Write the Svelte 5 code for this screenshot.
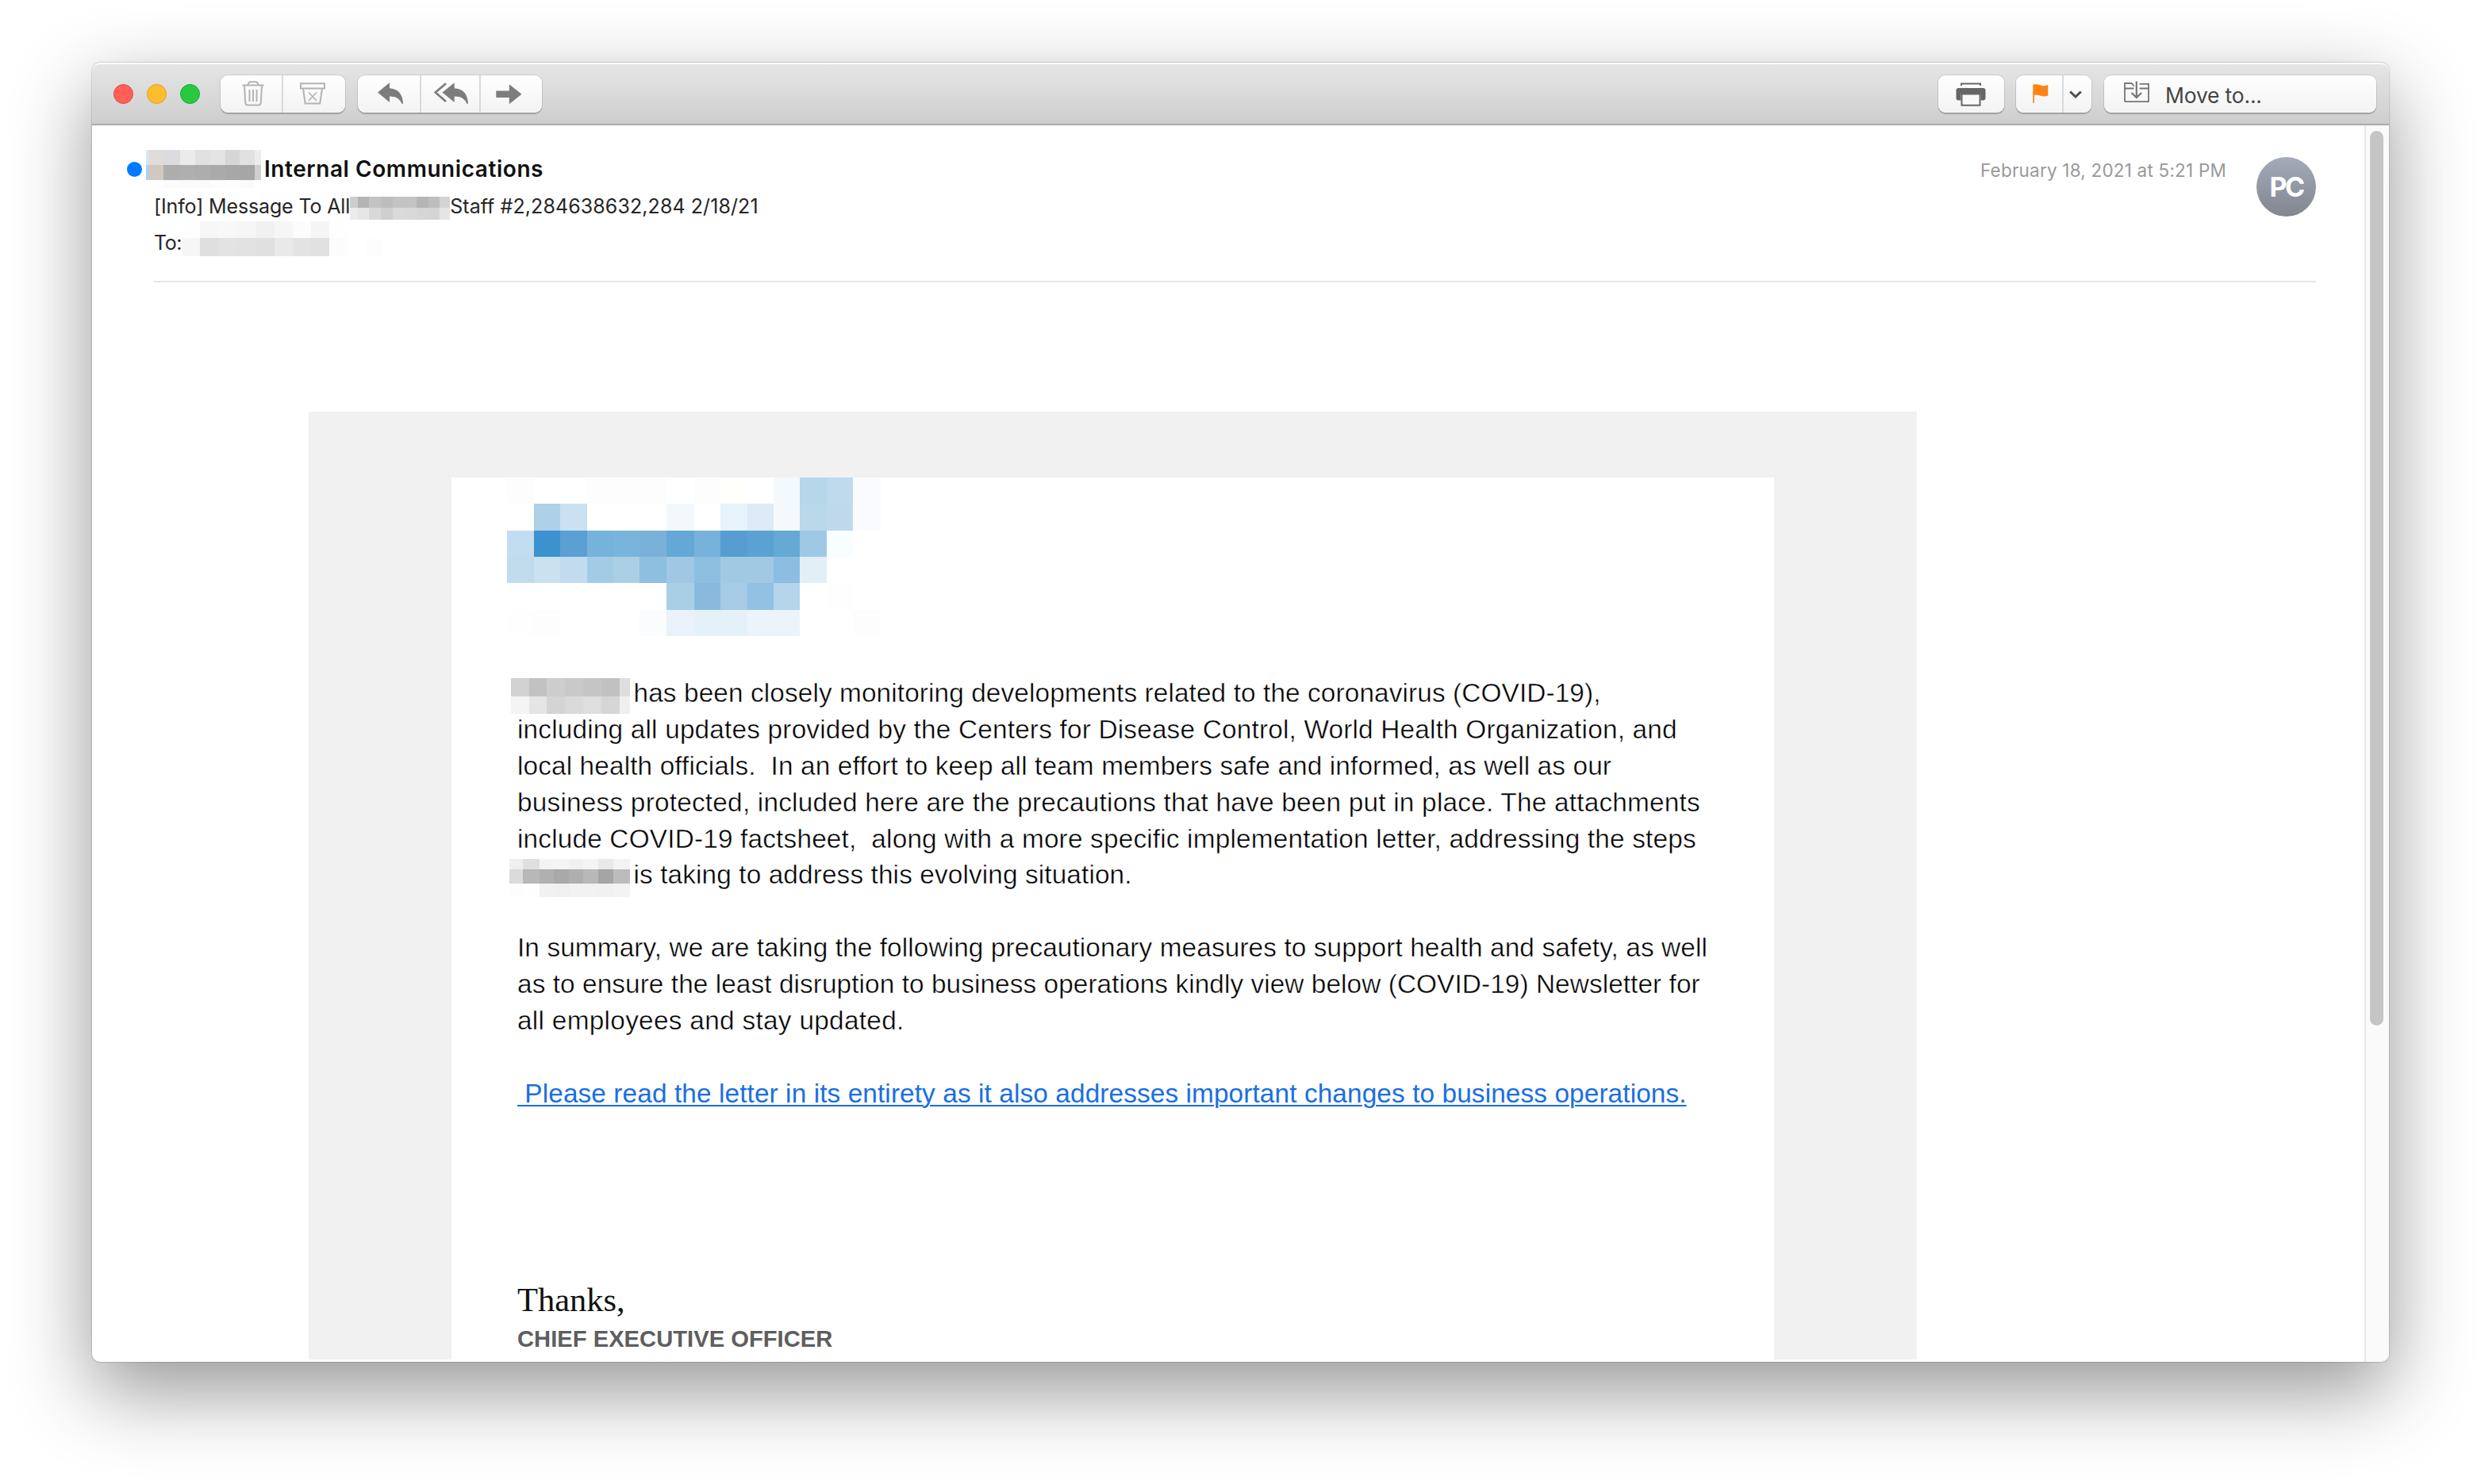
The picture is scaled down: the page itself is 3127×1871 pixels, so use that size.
<script lang="ts">
  interface Pixels {
    name: string;
    cols: number[];
    rows: number[];
    cells: string[][];
  }

  interface Line {
    text: string;
    spacing: number;
    block?: Pixels;
  }

  // Pixelated blocks: column edges, row edges and one colour per cell
  const sender: Pixels = {
    name: 'sender',
    cols: [0, 3, 22, 43, 62, 81, 100, 118, 137, 145],
    rows: [0, 19, 38, 48],
    cells: [
      ['#d5e8fb', '#e0dcd9', '#dadcdf', '#ebebeb', '#e1e1e1', '#e4e4e4', '#d6d6d6', '#e1e1e1', '#ececec'],
      ['#a6d2fc', '#d1c8be', '#adadad', '#afafaf', '#adadad', '#aaaaaa', '#a7a7a7', '#a6a6a6', '#cfcfcf'],
      ['#fdfdff', '#fefefe', '#fbfbfb', '#fafafa', '#fafafa', '#fcfcfc', '#fefefe', '#fafafa', '#fefefe']
    ]
  };

  const subject: Pixels = {
    name: 'subject',
    cols: [0, 10, 24, 39, 54, 69, 84, 99, 113, 126],
    rows: [0, 14, 29],
    cells: [
      ['#cdcdcd', '#b4b4b4', '#c3c3c3', '#bdbdbd', '#c4c4c4', '#c4c4c4', '#b5b5b5', '#bebebe', '#d3d3d3'],
      ['#ebebeb', '#e6e6e6', '#d8d8d8', '#cfcfcf', '#dadada', '#d9d9d9', '#d6d6d6', '#d5d5d5', '#e5e5e5']
    ]
  };

  const recipient: Pixels = {
    name: 'recipient',
    cols: [0, 23, 46, 69, 94, 117, 140, 163, 186, 209, 232, 254],
    rows: [0, 21, 44],
    cells: [
      ['#fefefe', '#f7f7f7', '#f8f8f8', '#f6f6f6', '#f1f1f1', '#f6f6f6', '#fcfcfc', '#f5f5f5', '#fefefe', '#fff', '#fff'],
      ['#f6f6f6', '#dfdfdf', '#e3e3e3', '#e2e2e2', '#e0e0e0', '#e9e9e9', '#e3e3e3', '#e1e1e1', '#fcfcfc', '#fff', '#fdfdfd']
    ]
  };

  const logo: Pixels = {
    name: 'logo',
    cols: [0, 33.5, 67, 100.5, 134, 167, 200.5, 235.5, 269, 302.5, 336, 369, 402.5, 436, 471],
    rows: [0, 33.3, 66.7, 100, 133.3, 166.7, 200],
    cells: [
      ['#fdfdfd', '#fff', '#fff', '#fdfdfd', '#fdfdfd', '#fdfdfd', '#fff', '#fdfdfd', '#fffffc', '#fff', '#f4f9fd', '#b6d6ea', '#bedaec', '#fafbfe'],
      ['#fff', '#aed1e8', '#cae1f1', '#fff', '#fff', '#fff', '#f3f8fc', '#fff', '#e7f3fa', '#dcebf5', '#f5f9fc', '#b9d8ea', '#c0d8ec', '#fafbfe'],
      ['#c2ddef', '#3b92ce', '#5aa0d3', '#76b3db', '#79b4db', '#7ab1d9', '#64a8d5', '#77b2da', '#569dd2', '#5ba2d3', '#65a9d5', '#9fc8e4', '#f8fdff', '#fff'],
      ['#c0dcec', '#cae1ef', '#c3dbee', '#a3cbe6', '#abd0e6', '#8dbfe0', '#a0c8e4', '#8dbfe1', '#a2c9e4', '#a2c9e4', '#8bbee0', '#e2eff7', '#fff', '#fff'],
      ['#fff', '#fff', '#fff', '#fff', '#fff', '#fff', '#a9cfe6', '#89bade', '#a6cbe6', '#93c1e3', '#b4d5eb', '#fff', '#fefefe', '#fff'],
      ['#fefefe', '#fdfdfd', '#fff', '#fff', '#fff', '#fbfcfe', '#e9f1fa', '#e5f1f8', '#e5f1f8', '#ebf3fb', '#ebf3fb', '#fff', '#fff', '#fdfdfd']
    ]
  };

  const company: Pixels = {
    name: 'company',
    cols: [0, 22.5, 45, 68, 91, 114, 137, 149.5],
    rows: [0, 22.7, 45.4],
    cells: [
      ['#d2d2d2', '#c2c2c2', '#cdcdcd', '#c9c9c9', '#c5c5c5', '#c1c1c1', '#dedede'],
      ['#f4f4f4', '#e5e5e5', '#d4d4d4', '#dadada', '#dedede', '#d6d6d6', '#efefef']
    ]
  };

  const companyAgain: Pixels = {
    name: 'company-again',
    cols: [0, 16.5, 38, 55.5, 74.5, 93, 112, 131, 151.5],
    rows: [0, 12.7, 31, 48],
    cells: [
      ['#efefef', '#dfdfdf', '#f3f3f3', '#f4f4f4', '#f1f1f1', '#f4f4f4', '#e9e9e9', '#f3f3f3'],
      ['#dbdbdb', '#b8b8b8', '#b0b0b0', '#a9a9a9', '#afafaf', '#b8b8b8', '#a5a5a5', '#bcbcbc'],
      ['#fdfdfd', '#fefefe', '#f1f1f1', '#f0f0f0', '#f2f2f2', '#f2f2f2', '#f1f1f1', '#f3f3f3']
    ]
  };

  const paragraphs: Line[][] = [
    [
      { text: 'has been closely monitoring developments related to the coronavirus (COVID-19),', spacing: 0.09, block: company },
      { text: 'including all updates provided by the Centers for Disease Control, World Health Organization, and', spacing: 0.17 },
      { text: 'local health officials.\u00a0 In an effort to keep all team members safe and informed, as well as our', spacing: 0.11 },
      { text: 'business protected, included here are the precautions that have been put in place. The attachments', spacing: 0.2 },
      { text: 'include COVID-19 factsheet,\u00a0 along with a more specific implementation letter, addressing the steps', spacing: 0.16 },
      { text: 'is taking to address this evolving situation.', spacing: 0.1, block: companyAgain }
    ],
    [
      { text: 'In summary, we are taking the following precautionary measures to support health and safety, as well', spacing: 0.09 },
      { text: 'as to ensure the least disruption to business operations kindly view below (COVID-19) Newsletter for', spacing: 0.06 },
      { text: 'all employees and stay updated.', spacing: 0.28 }
    ]
  ];
</script>

{#snippet pixelated(block: Pixels)}
  <svg
    class="pixels {block.name}"
    width={block.cols[block.cols.length - 1]}
    height={block.rows[block.rows.length - 1]}
    shape-rendering="crispEdges"
    aria-hidden="true"
  >
    {#each block.cells as row, r}
      {#each row as fill, c}
        <rect
          x={block.cols[c]}
          y={block.rows[r]}
          width={block.cols[c + 1] - block.cols[c]}
          height={block.rows[r + 1] - block.rows[r]}
          {fill}
        />
      {/each}
    {/each}
  </svg>
{/snippet}

<div class="desktop">
  <div class="window">
    <div class="toolbar">
      <div class="lights">
        <span class="light close"></span>
        <span class="light minimize"></span>
        <span class="light maximize"></span>
      </div>

      <div class="group edit">
        <button class="tool trash" aria-label="Delete">
          <svg width="28" height="32" viewBox="0 0 28 32" fill="none" stroke="#b3b3b3" stroke-width="2">
            <path d="M0.5 5.5h27M7.5 5Q8 1.2 11 1.2h6Q20 1.2 20.5 5" />
            <path d="M3 6l1.2 21.5Q4.5 30.6 7.5 30.6h13Q23.5 30.6 23.8 27.5L25 6" />
            <path d="M9.5 11v15M14 11v15M18.5 11v15" />
          </svg>
        </button>
        <button class="tool junk" aria-label="Junk">
          <svg width="32" height="28" viewBox="0 0 32 28" fill="none" stroke="#b3b3b3" stroke-width="2">
            <path d="M1 1.2h30v6.3H1z" />
            <path d="M4 7.5l2.7 19h18.6L28 7.5" />
            <path d="M11 12.5l10 10.5M21 12.5L11 23" stroke-width="1.6" />
          </svg>
        </button>
      </div>

      <div class="group respond">
        <button class="tool reply" aria-label="Reply">
          <svg width="32" height="28" viewBox="0 0 32 28" fill="#7d7d7d">
            <path d="M0 12.5L15 0.3V7.3C25 7.8 31.5 14 32 26.5L30.5 27C28 20.5 23 17.5 15 17.5V25z" />
          </svg>
        </button>
        <button class="tool reply-all" aria-label="Reply all">
          <svg width="43" height="28" viewBox="0 0 43 28" fill="#7d7d7d">
            <path d="M10.5 12.5L25.7 0.3V7.3C36 7.8 42.5 14 43 26.5L41.5 27C39 20.5 34 17.5 25.7 17.5V25z" />
            <path d="M15 1.3L1.8 12.5 15 24" fill="none" stroke="#7d7d7d" stroke-width="2.8" />
          </svg>
        </button>
        <button class="tool forward" aria-label="Forward">
          <svg width="33" height="26" viewBox="0 0 33 26" fill="#7d7d7d">
            <path d="M0.3 8.5h16.5V0.3L32.5 12.8 16.8 25.3V17H0.3z" />
          </svg>
        </button>
      </div>

      <div class="group print">
        <button class="tool printer" aria-label="Print">
          <svg width="38" height="30" viewBox="0 0 38 30" fill="#666">
            <path d="M7 4V1.5h24V4" fill="none" stroke="#666" stroke-width="2" />
            <path d="M3.5 7h31q3 0 3 3v9.5q0 3-3 3h-3v-8h-25v8h-3q-3 0-3-3V10q0-3 3-3z" />
            <path d="M7.5 14.5h23V28.8h-23z" fill="#fafafa" stroke="#666" stroke-width="2" />
          </svg>
        </button>
      </div>

      <div class="group flag">
        <button class="tool flagged" aria-label="Flag">
          <svg width="20" height="24" viewBox="0 0 20 24" fill="#ff8417">
            <path d="M0.3 0.7C4 0 7 0.5 10 1.5S16.5 2.3 19.3 1v13.5c-3 1.5-6 1.3-9.3 0.3S4.5 13.5 2 14v10H0.3z" />
          </svg>
        </button>
        <button class="tool options" aria-label="Flag options">
          <svg width="16" height="10" viewBox="0 0 16 10" fill="none" stroke="#4d4d4d" stroke-width="3">
            <path d="M1.2 1.5L8 8l6.8-6.5" />
          </svg>
        </button>
      </div>

      <button class="group move">
        <svg width="32" height="28" viewBox="0 0 32 28" fill="none" stroke="#757575" stroke-width="1.8">
          <path d="M12.5 9.5H1M1 26.2V3h8q1.5 0 2 1.5t2 1.5M1 26.2h30V3.8H19.5M19.5 9.5H31" />
          <path d="M15.8 0.5v21M9.5 15l6.3 6 6.3-6" stroke-width="2.2" />
        </svg>
        <span>Move to...</span>
      </button>
    </div>

    <div class="body">
      <div class="message">
        <header class="header">
          <div class="details">
            <div class="sender-row">
              <span class="unread"></span>
              {@render pixelated(sender)}
              <span class="sender-name">Internal Communications</span>
            </div>
            <div class="subject-row">
              <span class="subject-start">[Info] Message To All</span>
              {@render pixelated(subject)}
              <span class="subject-end">Staff #2,284638632,284 2/18/21</span>
            </div>
            <div class="to-row">
              <span class="to">To:</span>
              {@render pixelated(recipient)}
            </div>
          </div>
          <div class="date">February 18, 2021 at 5:21 PM</div>
          <div class="avatar">PC</div>
        </header>

        <div class="mail">
          <div class="card">
            {@render pixelated(logo)}
            {#each paragraphs as lines}
              <div class="text">
                {#each lines as line}
                  <div class="line" style:letter-spacing="{line.spacing}px">
                    {#if line.block}
                      {@render pixelated(line.block)}
                    {/if}
                    <span>{line.text}</span>
                  </div>
                {/each}
              </div>
            {/each}
            <div class="text">
              <a class="link" href="#letter">&nbsp;Please read the letter in its entirety as it also addresses important changes to business operations.</a>
            </div>
            <div class="thanks">Thanks,</div>
            <div class="signature">CHIEF EXECUTIVE OFFICER</div>
          </div>
        </div>
      </div>

      <div class="scrollbar">
        <div class="thumb"></div>
      </div>
    </div>
  </div>
</div>

<style>
  :global(body) {
    background: #fff;
    overflow: hidden;
  }

  .desktop {
    box-sizing: border-box;
    width: 3127px;
    height: 1871px;
    padding: 79px 116px;
    font-family: Inter, 'Liberation Sans', sans-serif;
  }

  .window {
    display: flex;
    flex-direction: column;
    width: 2895px;
    height: 1638px;
    border-radius: 10px;
    background: #fff;
    overflow: hidden;
    box-shadow:
      0 0 2px rgba(0, 0, 0, 0.4),
      0 36px 100px rgba(0, 0, 0, 0.42);
  }

  .toolbar {
    box-sizing: border-box;
    flex: none;
    display: flex;
    align-items: center;
    height: 79px;
    padding: 2px 16px 0 27px;
    background: linear-gradient(#e6e6e6, #cecece);
    border-bottom: 2px solid #a9a9a9;
    border-radius: 10px 10px 0 0;
    box-shadow: inset 0 2px 0 #fafafa;
  }

  .lights {
    display: flex;
    gap: 17px;
    margin-right: 26px;
  }

  .light {
    box-sizing: border-box;
    width: 25px;
    height: 25px;
    border-radius: 50%;
  }

  .close {
    background: #ff5f57;
    border: 1.5px solid #e2463f;
  }

  .minimize {
    background: #ffbd2e;
    border: 1.5px solid #e1a116;
  }

  .maximize {
    background: #28c941;
    border: 1.5px solid #12ac28;
  }

  .group {
    box-sizing: border-box;
    display: flex;
    height: 47px;
    border: 0;
    border-radius: 9px;
    background: linear-gradient(#fff, #f3f3f3);
    box-shadow:
      0 0 0 1px rgba(0, 0, 0, 0.09),
      0 2px 1px rgba(0, 0, 0, 0.2);
  }

  .tool {
    box-sizing: border-box;
    flex: 1;
    display: flex;
    align-items: center;
    justify-content: center;
    padding: 0;
    border: 0;
    background: none;
  }

  .tool + .tool {
    border-left: 2px solid #dadada;
  }

  .edit {
    width: 157px;
    margin-right: 16px;
  }

  .trash {
    padding: 0 0 2px 4px;
  }

  .junk {
    padding: 0 5px 2px 0;
  }

  .respond {
    width: 232px;
  }

  .reply {
    flex: 0 0 78px;
    padding: 0 0 2px 4px;
  }

  .reply-all {
    flex: 0 0 75px;
    padding: 0 0 2px 1px;
  }

  .forward {
    padding: 1px 7px 0 0;
  }

  .print {
    width: 83px;
    margin-left: auto;
    margin-right: 15px;
  }

  .printer {
    padding-right: 1px;
  }

  .flag {
    width: 95px;
    margin-right: 16px;
  }

  .flagged {
    padding: 0 0 2px 4px;
  }

  .options {
    flex: 0 0 37px;
    padding-right: 5px;
  }

  .move {
    align-items: center;
    gap: 20px;
    width: 343px;
    padding: 0 0 0 25px;
    font-family: inherit;
    font-size: 26.5px;
    color: #454545;
  }

  .move svg {
    margin-bottom: 5px;
  }

  .move span {
    margin-top: 2px;
    letter-spacing: -0.2px;
  }

  .body {
    flex: 1;
    display: flex;
    min-height: 0;
  }

  .message {
    flex: 1;
    display: flex;
    flex-direction: column;
    min-width: 0;
  }

  .header {
    box-sizing: border-box;
    flex: none;
    display: flex;
    height: 198px;
    margin: 0 61px 0 78px;
    padding-top: 31px;
    border-bottom: 2px solid #e6e6e6;
  }

  .details {
    flex: 1;
    font-size: 25px;
    color: #262626;
    white-space: nowrap;
  }

  .pixels {
    display: block;
    flex: none;
  }

  .sender-row,
  .subject-row,
  .to-row {
    display: flex;
    align-items: center;
  }

  .sender-row {
    height: 48px;
    margin-left: -34px;
  }

  .unread {
    width: 19px;
    height: 19px;
    margin-right: 5px;
    border-radius: 50%;
    background: #007aff;
  }

  .sender-name {
    margin-left: 4px;
    font-size: 28px;
    font-weight: 600;
    letter-spacing: 0.56px;
    color: #111;
  }

  .subject-row {
    height: 45px;
  }

  .subject-row .pixels {
    margin-top: 6px;
  }

  .subject-start {
    letter-spacing: -0.14px;
  }

  .subject-end {
    letter-spacing: 0.08px;
  }

  .to-row {
    height: 46px;
  }

  .to {
    margin-top: 1px;
    letter-spacing: -0.5px;
  }

  .to-row .pixels {
    margin-bottom: 8px;
  }

  .date {
    margin-right: 38px;
    font-size: 22.5px;
    line-height: 52px;
    letter-spacing: 0.2px;
    color: #999;
    white-space: nowrap;
  }

  .avatar {
    width: 75px;
    height: 75px;
    margin-top: 9px;
    border-radius: 50%;
    background: linear-gradient(#a3aab9, #828690);
    color: #fff;
    font-size: 34px;
    font-weight: 700;
    line-height: 76px;
    text-align: center;
    letter-spacing: -2.5px;
  }

  .mail {
    box-sizing: border-box;
    flex: 1;
    display: flex;
    width: 2027px;
    min-height: 0;
    margin: 163px 0 3px 273px;
    padding: 83px 0 0 180px;
    background: #f1f1f1;
  }

  .card {
    box-sizing: border-box;
    width: 1667px;
    padding-left: 83px;
    background: #fff;
    font-family: 'Liberation Sans', Arial, sans-serif;
    font-size: 33.4px;
  }

  .logo {
    margin: 0 0 49px -13px;
  }

  .text {
    margin-bottom: 45.9px;
    color: #000;
    line-height: 45.9px;
    white-space: nowrap;
    /* shaves the strokes down to a light weight */
    -webkit-text-stroke: 0.45px #fff;
  }

  .line {
    display: flex;
    height: 45.9px;
  }

  .company {
    margin: 4px 5px 0 -8px;
  }

  .company-again {
    margin: 3px 5px 0 -10px;
  }

  .link {
    display: block;
    width: max-content;
    height: 45.9px;
    color: #1a6fe0;
    letter-spacing: 0.09px;
    text-decoration: underline;
    text-decoration-thickness: 2px;
    text-underline-offset: 3px;
    -webkit-text-stroke: 0;
  }

  .thanks {
    margin-top: 212px;
    font-family: 'Liberation Serif', 'Times New Roman', serif;
    font-size: 42.5px;
    line-height: 50px;
    color: #111;
  }

  .signature {
    font-size: 29.2px;
    font-weight: 700;
    line-height: 49.8px;
    color: #5e5e5e;
  }

  .scrollbar {
    box-sizing: border-box;
    flex: none;
    width: 31px;
    padding: 7px 7px 0 5px;
    background: #fafafa;
    border-left: 2px solid #e8e8e8;
  }

  .thumb {
    height: 1128px;
    border-radius: 9px;
    background: #c5c5c5;
  }
</style>
